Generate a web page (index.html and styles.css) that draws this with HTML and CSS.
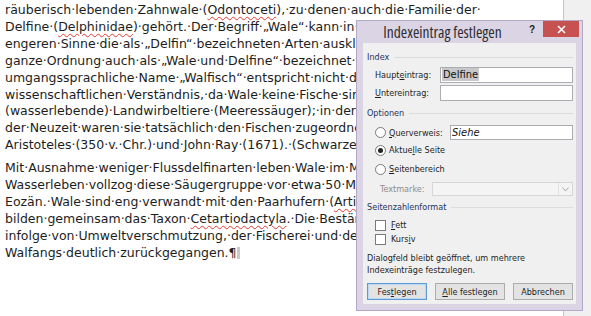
FILE: index.html
```html
<!DOCTYPE html>
<html lang="de">
<head>
  <meta charset="UTF-8">
  <title>Indexeintrag festlegen</title>
  <link rel="stylesheet" href="styles.css">
</head>
<body>

<div class="workspace">
  <div class="page">
    <p class="para">
      <span class="ln">räuberisch·lebenden·Zahnwale·(<span class="typo">Odontoceti</span>),·zu·denen·auch·die·Familie·der·</span>
      <span class="ln">Delfine·(<span class="typo">Delphinidae</span>)·gehört.·Der·Begriff·„Wale“·kann·in·einem·</span>
      <span class="ln">engeren·Sinne·die·als·„Delfin“·bezeichneten·Arten·ausklammern·oder·die·</span>
      <span class="ln">ganze·Ordnung·auch·als·„Wale·und·Delfine“·bezeichnet·wird.·Der·</span>
      <span class="ln">umgangssprachliche·Name·„Walfisch“·entspricht·nicht·dem·</span>
      <span class="ln">wissenschaftlichen·Verständnis,·da·Wale·keine·Fische·sind,·sondern·</span>
      <span class="ln">(wasserlebende)·Landwirbeltiere·(Meeressäuger);·in·der·Antike·und·bis·in·</span>
      <span class="ln">der·Neuzeit·waren·sie·tatsächlich·den·Fischen·zugeordnet·worden,·so·bei·</span>
      <span class="ln">Aristoteles·(350·v.·Chr.)·und·John·Ray·(1671).·(Schwarzer,·2012)¶</span>
    </p>
    <p class="para">
      <span class="ln">Mit·Ausnahme·weniger·Flussdelfinarten·leben·Wale·im·Meer.·Den·Übergang·zum·</span>
      <span class="ln">Wasserleben·vollzog·diese·Säugergruppe·vor·etwa·50·Millionen·Jahren·im·</span>
      <span class="ln">Eozän.·Wale·sind·eng·verwandt·mit·den·Paarhufern·(<span class="typo">Artiodactyla</span>)·und·</span>
      <span class="ln">bilden·gemeinsam·das·Taxon·<span class="typo">Cetartiodactyla</span>.·Die·Bestände·vieler·Walarten·sind·</span>
      <span class="ln">infolge·von·Umweltverschmutzung,·der·Fischerei·und·des·intensiven·</span>
      <span class="ln">Walfangs·deutlich·zurückgegangen.¶<span class="caret"></span></span>
    </p>
  </div>
  <div class="gutter"></div>
</div>

<!-- Dialog liegt über dem Dokument -->
<div class="dialog">
  <div class="titlebar">
    <div class="title">Indexeintrag festlegen</div>
    <div class="help">?</div>
    <div class="close">
      <svg width="9" height="9" viewBox="0 0 9 9"><path d="M1 1L8 8M8 1L1 8" stroke="#fff" stroke-width="1.6"/></svg>
    </div>
  </div>

  <div class="client">
    <div class="group-head">Index</div>
    <div class="field">
      <label class="lbl">Haupt<u>e</u>intrag:</label>
      <div class="input"><span class="sel">Delfine</span></div>
    </div>
    <div class="field field-2">
      <label class="lbl"><u>U</u>ntereintrag:</label>
      <div class="input"></div>
    </div>

    <div class="group-head head-opt">Optionen</div>
    <div class="field field-q">
      <span class="radio"></span>
      <label class="rlbl"><u>Q</u>uerverweis:</label>
      <div class="input input-q"><i>Siehe</i></div>
    </div>
    <div class="option opt-a">
      <span class="radio checked"></span>
      <label class="rlbl">Aktue<u>l</u>le Seite</label>
    </div>
    <div class="option opt-s">
      <span class="radio"></span>
      <label class="rlbl"><u>S</u>eitenbereich</label>
    </div>
    <div class="field field-t">
      <label class="lbl lbl-off">Textmarke:</label>
      <div class="combo"><span class="combo-arrow">
        <svg width="7" height="5" viewBox="0 0 7 5"><path d="M0.5 0.5L3.5 4L6.5 0.5" fill="none" stroke="#a6a6a6" stroke-width="1"/></svg>
      </span></div>
    </div>

    <div class="group-head head-fmt">Seitenzahlenformat</div>
    <div class="option opt-f">
      <span class="check"></span>
      <label class="clbl"><u>F</u>ett</label>
    </div>
    <div class="option">
      <span class="check"></span>
      <label class="clbl">Kurs<u>i</u>v</label>
    </div>

    <p class="note">Dialogfeld bleibt geöffnet, um mehrere<br>Indexeinträge festzulegen.</p>

    <div class="buttons">
      <button type="button" class="btn btn-focus">Fes<u>t</u>legen</button>
      <button type="button" class="btn btn-all"><u>A</u>lle festlegen</button>
      <button type="button" class="btn">Abbrechen</button>
    </div>
  </div>
</div>

</body>
</html>
```

FILE: styles.css
```css
body { margin: 0; width: 591px; height: 316px; overflow: hidden; position: relative; background: #f0f0f0; }

.workspace { display: flex; height: 316px; }
.page { width: 564px; flex: none; box-sizing: border-box; background: #fff; border-right: 1px solid #c6c6c6; padding: 2px 0 0 5px; overflow: hidden;
        font-family: "DejaVu Sans", sans-serif; font-size: 12.5px; line-height: 16.9px; color: #1d1d1d; }
.gutter { flex: 1; background: #f0f0f0; }
.para { margin: 0 0 6px; }
.ln { display: block; white-space: nowrap; }
.typo { text-decoration: underline wavy #e2382f; text-decoration-thickness: 1px; text-underline-offset: 2px; }
.caret { display: inline-block; width: 3px; height: 12px; background: #c9c9c9; vertical-align: -2px; }

/* Dialog */
.dialog { position: absolute; left: 356px; top: 20px; width: 227px; height: 291px; box-sizing: border-box;
          background: #dad4e4; border: 1px solid #b3a9c6; display: flex; flex-direction: column;
          font-family: "DejaVu Sans", sans-serif; font-stretch: condensed; font-size: 9px; color: #1e1e1e; }
.titlebar { height: 22px; display: flex; flex: none; }
.title { width: 171px; text-align: center; font-family: "Open Sans", sans-serif; font-size: 15.5px; line-height: 23px; color: #2e2e2e; }
.help { width: 8px; margin-right: 7px; font-family: "Liberation Sans", sans-serif; font-weight: bold; font-size: 10px; line-height: 18px; color: #222; text-align: center; }
.close { width: 36px; height: 16px; background: #c75050; display: flex; align-items: center; justify-content: center; }

.client { flex: 1; margin: 0 6px 6px; background: #f0f0f0; padding: 7px 3px 0 4px; display: flex; flex-direction: column; }

.group-head { display: flex; align-items: center; gap: 5px; height: 14px; color: #1d3461; }
.group-head::after { content: ""; flex: 1; border-top: 1px solid #dcdcdc; }
.head-opt { margin-top: 5px; }
.head-fmt { margin-top: 4px; }

.field { display: flex; align-items: center; height: 16px; margin-top: 3px; padding-left: 8px; }
.field-2 { margin-top: 2px; }
.field-q { height: 15px; margin-top: 5px; }
.field-t { height: 14px; margin-top: 6px; padding-left: 13px; }
.lbl { width: 65px; flex: none; }
.field-t .lbl { width: 52px; }
.lbl-off { color: #8c8c8c; }

.input { flex: 1; align-self: stretch; box-sizing: border-box; background: #fff; border: 1px solid #abadb3; padding: 0 1px;
         font-size: 11px; line-height: 14px; color: #111; }
.input-q { flex: none; width: 123px; margin-left: auto; line-height: 13px; }
.sel { background: #c8c8c8; padding: 0 1px; }

.combo { flex: 1; align-self: stretch; box-sizing: border-box; background: #f4f4f4; border: 1px solid #d6d6d6; display: flex; justify-content: flex-end; }
.combo-arrow { width: 13px; border-left: 1px solid #e2e2e2; display: flex; align-items: center; justify-content: center; }

.option { display: flex; align-items: center; height: 14px; padding-left: 8px; }
.opt-a { margin-top: 3px; }
.opt-s { margin-top: 5px; }
.opt-f { margin-top: 4px; }

.radio { width: 11px; height: 11px; flex: none; box-sizing: border-box; border-radius: 50%; border: 1px solid #7a7a7a; background: #fff; position: relative; }
.radio.checked::after { content: ""; position: absolute; left: 2px; top: 2px; width: 5px; height: 5px; border-radius: 50%; background: #222; }
.rlbl { margin-left: 3px; }
.check { width: 11px; height: 11px; flex: none; box-sizing: border-box; border: 1px solid #7a7a7a; background: #fff; }
.clbl { margin-left: 5px; }

.note { margin: 6px 0 0; line-height: 12px; }

.buttons { display: flex; gap: 8px; margin-top: 7px; }
.btn { height: 17px; width: 60px; padding: 0; box-sizing: border-box; background: #e3e3e3; border: 1px solid #acacac;
       font-family: "DejaVu Sans", sans-serif; font-stretch: condensed; font-size: 9px; color: #1e1e1e; }
.btn-all { width: 70px; }
.btn-focus { border-color: #5e9ad8; box-shadow: inset 0 0 0 1px #bcd7f2; }
```
